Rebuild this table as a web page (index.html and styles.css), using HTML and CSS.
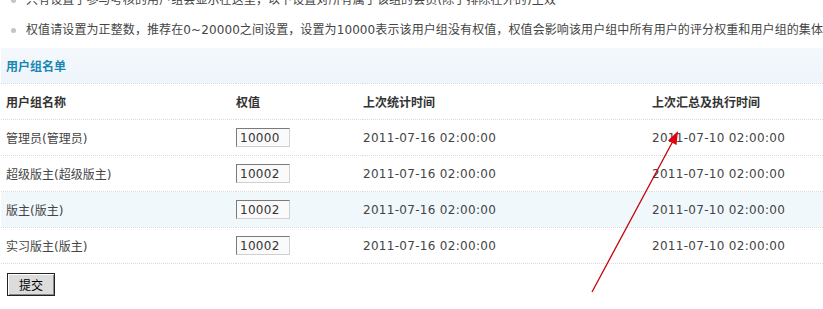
FILE: index.html
```html
<!DOCTYPE html>
<html lang="zh-CN">
<head>
    <meta charset="UTF-8">
    <title>用户组名单</title>
    <link rel="stylesheet" href="styles.css">
</head>
<body>
    <ul class="tips">
        <li>只有设置了参与考核的用户组会显示在这里，以下设置对所有属于该组的会员(除了排除在外的)生效</li>
        <li>权值请设置为正整数，推荐在0~20000之间设置，设置为10000表示该用户组没有权值，权值会影响该用户组中所有用户的评分权重和用户组的集体评分</li>
    </ul>

    <form class="groups">
        <table class="tb">
            <colgroup>
                <col class="c-name">
                <col class="c-weight">
                <col class="c-stat">
                <col>
            </colgroup>
            <tr class="caption">
                <th colspan="4">用户组名单</th>
            </tr>
            <tr class="head">
                <td>用户组名称</td>
                <td>权值</td>
                <td>上次统计时间</td>
                <td>上次汇总及执行时间</td>
            </tr>
            <tr>
                <td>管理员(管理员)</td>
                <td><input type="text" class="txt" value="10000"></td>
                <td class="time">2011-07-16 02:00:00</td>
                <td class="time">2011-07-10 02:00:00</td>
            </tr>
            <tr>
                <td>超级版主(超级版主)</td>
                <td><input type="text" class="txt" value="10002"></td>
                <td class="time">2011-07-16 02:00:00</td>
                <td class="time">2011-07-10 02:00:00</td>
            </tr>
            <tr class="hover">
                <td>版主(版主)</td>
                <td><input type="text" class="txt" value="10002"></td>
                <td class="time">2011-07-16 02:00:00</td>
                <td class="time">2011-07-10 02:00:00</td>
            </tr>
            <tr>
                <td>实习版主(版主)</td>
                <td><input type="text" class="txt" value="10002"></td>
                <td class="time">2011-07-16 02:00:00</td>
                <td class="time">2011-07-10 02:00:00</td>
            </tr>
        </table>
        <button type="submit" class="btn">提交</button>
    </form>

    <!-- red pointer drawn over the table -->
    <svg class="mark" width="823" height="309" viewBox="0 0 823 309">
        <line x1="592" y1="292" x2="673" y2="141" stroke="#c8000a" stroke-width="1.3"/>
        <polygon points="678,131 676.5,145 668,140.5" fill="#e00010"/>
    </svg>
</body>
</html>
```

FILE: styles.css
```css
body {
    margin: 0;
    font-family: "DejaVu Sans", "Noto Sans CJK SC", sans-serif;
    font-size: 12px;
    color: #333;
    background: #fff;
    position: relative;
    overflow: hidden;
}
.tips {
    list-style: none;
    margin: -15px 0 3px;
    padding: 0;
    white-space: nowrap;
}
.tips li {
    position: relative;
    height: 30px;
    line-height: 30px;
    padding-left: 26px;
    color: #444;
    letter-spacing: 0.1px;
}
.tips li:before {
    content: "";
    position: absolute;
    left: 11px;
    top: 13px;
    width: 5px;
    height: 5px;
    border-radius: 50%;
    background: #c4c4c4;
}
.groups {
    padding-left: 1px;
}
.tb {
    width: 100%;
    table-layout: fixed;
    border-collapse: collapse;
}
.c-name { width: 235px; }
.c-weight { width: 127px; }
.c-stat { width: 289px; }
.tb td, .tb th {
    height: 35px;
    padding: 0;
    text-align: left;
    border-bottom: 1px dotted #dadada;
    color: #444;
    white-space: nowrap;
    overflow: hidden;
}
.tb td:first-child, .tb th {
    padding-left: 5px;
}
.caption th {
    background: linear-gradient(#f4f8fc, #eef5fb);
    color: #1587b2;
    font-weight: bold;
}
.head td {
    font-weight: bold;
    color: #333;
}
.time {
    color: #555;
    letter-spacing: 0.3px;
}
.hover td {
    background: #f1f8fc;
}
.txt {
    box-sizing: border-box;
    width: 54px;
    height: 19px;
    margin: 0;
    padding: 0 3px;
    font: 12px "DejaVu Sans", sans-serif;
    letter-spacing: 0.3px;
    color: #333;
    background: #fafafa;
    border: 1px solid;
    border-color: #7a7a7a #d0d0d0 #d0d0d0 #7a7a7a;
    vertical-align: middle;
}
.btn {
    display: block;
    box-sizing: border-box;
    width: 48px;
    height: 23px;
    margin: 9px 0 0 6px;
    padding: 0;
    font: 12px "Noto Sans CJK SC", sans-serif;
    color: #000;
    background: #dcdcdc;
    border: 1px solid #222;
    box-shadow: inset 1px 1px 0 #fff, inset -1px -1px 0 #888;
}
.mark {
    position: absolute;
    left: 0;
    top: 0;
    pointer-events: none;
}
```
